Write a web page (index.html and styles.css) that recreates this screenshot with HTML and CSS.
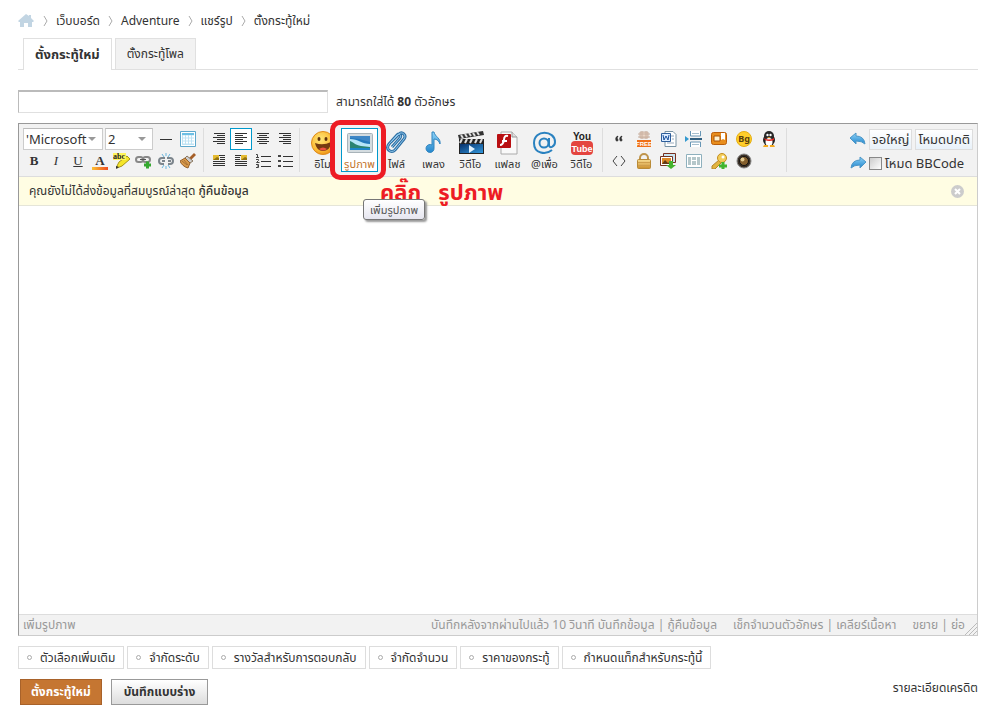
FILE: index.html
```html
<!DOCTYPE html>
<html lang="th">
<head>
<meta charset="utf-8">
<meta name="viewport" content="width=device-width, initial-scale=1">
<title>ตั้งกระทู้ใหม่</title>
<link rel="stylesheet" href="styles.css">
</head>
<body>
<svg class="defs" aria-hidden="true">
  <defs>
    <linearGradient id="gold" x1="0" y1="0" x2="0" y2="1"><stop offset="0" stop-color="#f8dd92"/><stop offset="1" stop-color="#cc8f2c"/></linearGradient>
    <linearGradient id="blue" x1="0" y1="0" x2="0" y2="1"><stop offset="0" stop-color="#8ed3f8"/><stop offset="1" stop-color="#2387cd"/></linearGradient>
    <linearGradient id="deep" x1="0" y1="0" x2="1" y2="1"><stop offset="0" stop-color="#07306a"/><stop offset="1" stop-color="#3197dc"/></linearGradient>
    <radialGradient id="face" cx=".4" cy=".35" r=".7"><stop offset="0" stop-color="#ffe779"/><stop offset=".7" stop-color="#fbb932"/><stop offset="1" stop-color="#e98a14"/></radialGradient>
  </defs>
</svg>

<nav class="crumbs" aria-label="เส้นทาง">
  <a href="#" aria-label="หน้าแรก"><svg width="16" height="14" viewBox="0 0 16 14"><path d="M8 0 0 7l1 1h1v5h4V9h4v4h4V8h1l1-1-3-3V1h-2v1z" fill="#c2d5e3"/></svg></a>
  <svg class="sep" width="5" height="10"><path d="m1 0 3 5-3 5" fill="none" stroke="#aaa"/></svg><a href="#">เว็บบอร์ด</a>
  <svg class="sep" width="5" height="10"><path d="m1 0 3 5-3 5" fill="none" stroke="#aaa"/></svg><a href="#">Adventure</a>
  <svg class="sep" width="5" height="10"><path d="m1 0 3 5-3 5" fill="none" stroke="#aaa"/></svg><a href="#">แชร์รูป</a>
  <svg class="sep" width="5" height="10"><path d="m1 0 3 5-3 5" fill="none" stroke="#aaa"/></svg><span>ตั้งกระทู้ใหม่</span>
</nav>

<nav class="tabs">
  <a href="#" class="tab current">ตั้งกระทู้ใหม่</a>
  <a href="#" class="tab">ตั้งกระทู้โพล</a>
</nav>

<main>
<div class="subject">
  <input type="text" id="subject">
  <label for="subject">สามารถใส่ได้ <b>80</b> ตัวอักษร</label>
</div>

<section class="editor">
  <div class="toolbar">
    <div class="group text-tools">
      <div class="row">
        <select class="font" aria-label="แบบอักษร"><option>'Microsoft</option></select>
        <select class="size" aria-label="ขนาด"><option>2</option></select>
        <button class="tool" aria-label="เส้นคั่น"><svg width="16" height="16"><path d="M2 8.500h12" stroke="#333"/></svg></button>
        <button class="tool" aria-label="ตาราง"><svg width="16" height="16"><path d="M.5.5h15v15H.5z" fill="#fff" stroke="#5fa8cc"/><path d="M2 2h12v2H2z" fill="#6dbfe4"/><path d="M2 4h12v10H2z" fill="#bfe3f4"/><path d="M3 5.500h11M3 8.500h11M3 11.500h11" stroke="#fff" stroke-width="2" stroke-dasharray="2 1"/></svg></button>
      </div>
      <div class="row">
        <button class="tool glyph"><b>B</b></button>
        <button class="tool glyph"><em>I</em></button>
        <button class="tool glyph"><u>U</u></button>
        <button class="tool glyph color">A</button>
        <button class="tool" aria-label="สีพื้น"><svg width="18" height="16"><path d="m4 13 2-4 8-6 3 3-8 7-5 2z" fill="#f5e529" stroke="#a59517"/><path d="m3 13 3 1-3 2z" fill="#333"/><path d="M0 0h13v7H0z" fill="#fff45c"/><text x="0" y="6" class="abc">abc</text></svg></button>
        <button class="tool" aria-label="ลิงก์"><svg width="18" height="16" fill="none"><rect x="1" y="4" width="7" height="5" rx="2.500" stroke="#888" stroke-width="2"/><rect x="8" y="4" width="7" height="5" rx="2.500" stroke="#888" stroke-width="2"/><path d="M5 6.500h6" stroke="#555"/><path d="M9 12h7M12.500 8.500v7" stroke="#35a830" stroke-width="3"/></svg></button>
        <button class="tool" aria-label="ลบลิงก์"><svg width="16" height="16" fill="none"><path d="M7 5H4a3 3 0 0 0 0 6h2M9 5h3a3 3 0 0 1 0 6h-2M4 8h3M10 8h3" stroke="#7c858c" stroke-width="2"/><path d="m4 1 2 3M8 0v3M12 1l-2 3M4 15l2-3M8 16v-3M12 15l-2-3" stroke="#68b6de"/></svg></button>
        <button class="tool" aria-label="ล้างรูปแบบ"><svg width="16" height="16"><path d="m9 5 5-5 2 2-5 5z" fill="#a55f28"/><path d="m7 3 6 5-3 2-5-5z" fill="#ccc" stroke="#8b7860"/><path d="m5 5 5 5-2 5C4 14 1 11 0 8z" fill="#d99b4c" stroke="#95602b"/><path d="m2 8 5 4M4 7l4 5" stroke="#a87034"/></svg></button>
      </div>
    </div>

    <div class="group align-tools">
      <div class="row">
        <button class="tool" aria-label="จัดขวา"><svg width="12" height="12" stroke="#333"><path d="M1 .5h11M4 2.500h8M0 4.500h12M4 6.500h8M0 8.500h12M4 10.500h8"/></svg></button>
        <button class="tool on" aria-label="ชิดซ้าย"><svg width="12" height="12" stroke="#333"><path d="M0 .5h12M0 2.500h8M0 4.500h12M0 6.500h8M0 8.500h12M0 10.500h8"/></svg></button>
        <button class="tool" aria-label="กึ่งกลาง"><svg width="12" height="12" stroke="#333"><path d="M0 .5h12M2 2.500h8M0 4.500h12M2 6.500h8M0 8.500h12M2 10.500h8"/></svg></button>
        <button class="tool" aria-label="ชิดขวา"><svg width="12" height="12" stroke="#333"><path d="M0 .5h12M4 2.500h8M0 4.500h12M4 6.500h8M0 8.500h12M4 10.500h8"/></svg></button>
      </div>
      <div class="row">
        <button class="tool" aria-label="ลอยซ้าย"><svg width="12" height="12"><path d="M0 .5h12M7 2.500h5M7 4.500h5M0 6.500h12M0 8.500h12M0 10.500h12" stroke="#333"/><path d="M0 0h6v5H0z" fill="#e5bb31"/><path d="M0 5h6V3L4 2z" fill="#927310"/></svg></button>
        <button class="tool" aria-label="ลอยขวา"><svg width="12" height="12"><path d="M0 .5h12M0 2.500h5M0 4.500h5M0 6.500h12M0 8.500h12M0 10.500h12" stroke="#333"/><path d="M6 0h6v5H6z" fill="#e5bb31"/><path d="M6 5h6V3l-2-1z" fill="#927310"/></svg></button>
        <button class="tool" aria-label="รายการลำดับ"><svg width="15" height="14"><path d="M5 2.500h10M5 7.500h10M5 12.500h10" stroke="#333"/><path d="M0 .5h1.500v3M0 3.500h3M0 5.500h2.500v1L.5 8.500h3M0 10.500h2.500v3H0M1 12h1" fill="none" stroke="#444"/></svg></button>
        <button class="tool" aria-label="รายการ"><svg width="15" height="14"><path d="M5 2.500h10M5 7.500h10M5 12.500h10" stroke="#333"/><path d="M0 1h3v2H0zM0 6h3v2H0zM0 11h3v2H0z" fill="#444"/></svg></button>
      </div>
    </div>

    <div class="group big-tools">
      <button class="big"><svg width="24" height="24"><circle cx="12" cy="12" r="11.500" fill="url(#face)" stroke="#de8b1b"/><ellipse cx="8" cy="8" rx="1.500" ry="2" fill="#60340e"/><ellipse cx="15" cy="8" rx="1.500" ry="2" fill="#60340e"/><path d="M4 12q8 3 16-1c0 5-3 9-8 9s-7-4-8-8z" fill="#743b10"/><path d="M8 18q4-3 8 0-4 3-8 0" fill="#ef5042"/></svg>อิโม</button>
      <div class="spot">
        <button class="big on"><svg width="26" height="24"><rect x=".5" y="2.500" width="25" height="19" rx="1" fill="#d4dce0" stroke="#a8b3b9"/><path d="M3 5h20v14H3z" fill="#2379bc"/><path d="M3 5h20v6l-11-3-9-1z" fill="#3f87c6"/><path d="M3 8c8 0 12 5 20 5v4H3z" fill="#b5e5f8"/><path d="M3 10c5 2 5 4 11 5l9 1v2H3z" fill="#2a8371"/><path d="M3 17h20v2H3z" fill="#1d85c9"/></svg>รูปภาพ</button>
        <span class="ring"></span>
        <strong class="callout">คลิ๊ก&nbsp;&nbsp; รูปภาพ</strong>
        <span class="tip" role="tooltip">เพิ่มรูปภาพ</span>
      </div>
      <button class="big"><svg width="24" height="24" fill="none"><path d="m6 11 8-8c3-3 8 1 5 5l-9 11c-4 4-10-1-6-6l8-9c2-2 5 0 3 3l-8 9" stroke="#2f70a5" stroke-width="3"/><path d="m6 11 8-8c3-3 8 1 5 5l-9 11c-4 4-10-1-6-6l8-9c2-2 5 0 3 3l-8 9" stroke="#90c9ed"/></svg>ไฟล์</button>
      <button class="big"><svg width="24" height="24"><path d="M10 1h2c1 5 7 6 6 12-1-3-3-5-6-5v9a4 4 0 1 1-2-3z" fill="url(#blue)" stroke="#3185bf"/></svg>เพลง</button>
      <button class="big"><svg width="26" height="24"><path d="m0 4 25-4 1 4L1 8z" fill="#333"/><path d="m3 4 2 3m2-4 2 3m2-4 2 3m2-3 2 3m2-4 2 3" stroke="#ddd" stroke-width="2"/><path d="M1 8h25v15H1z" fill="#222"/><path d="M4 8 2 12m7-4-2 4m7-4-2 4m7-4-2 4m7-4-2 4" stroke="#ddd" stroke-width="2"/><path d="M2 13h23v9H2z" fill="url(#deep)"/><path d="m11 14 6 4-6 4z" fill="#dff1ff"/></svg>วิดีโอ</button>
      <button class="big"><svg width="24" height="24"><path d="M5 1h11l5 5v17H5z" fill="#f9f9f9" stroke="#aaa"/><path d="M16 1v5h5" fill="#ddd" stroke="#999"/><rect x="1" y="3" width="14" height="14" rx="1" fill="#b90f12"/><path d="M12 5q-4-1-4 4-1 5-4 5M6 10h5" fill="none" stroke="#fff" stroke-width="2"/></svg>แฟลช</button>
      <button class="big"><svg width="24" height="24" fill="none" stroke="#2a82c0"><circle cx="11" cy="12" r="4.500" stroke-width="2"/><path d="M16 7v7c0 4 6 2 6-3 0-12-21-13-21 1 0 11 12 12 18 7" stroke-width="2"/></svg>@เพื่อ</button>
      <button class="big"><svg width="24" height="24"><text x="12" y="9" class="yt you">You</text><rect x="1" y="10" width="22" height="14" rx="4" fill="#e4453f"/><text x="12" y="21" class="yt tube">Tube</text></svg>วิดีโอ</button>
    </div>

    <div class="group extras">
      <div class="row">
        <button class="tool" aria-label="อ้างอิง"><svg width="16" height="16"><path d="M7 5Q4 6 5 9a1 1 0 1 0 1-1q0-2 1-3zm4 0Q8 6 9 9a1 1 0 1 0 1-1q0-2 1-3z" fill="#333" stroke="#333"/></svg></button>
        <button class="tool" aria-label="ฟรี"><svg width="16" height="16"><path d="M4 1h8v6H4zM2 3h12M2 6h12M6 0v8M10 0v8" fill="#ead5c5" stroke="#c9b0a0"/><path d="M1 9h14v7H1z" fill="#ef7019"/><text x="8" y="15" class="free">FREE</text></svg></button>
        <button class="tool" aria-label="Word"><svg width="16" height="16"><path d="M4 .5h8l3 3v12H4z" fill="#fff" stroke="#7893a4"/><path d="M10 5h3M11 8h2M6 12h7" stroke="#9ab"/><path d="M.5 2.500h9v8h-9z" fill="#dcecff" stroke="#2d5d9a"/><path d="m2 4 1 5 2-4 2 4 1-5" fill="none" stroke="#174f9c"/></svg></button>
        <button class="tool" aria-label="แบ่งหน้า"><svg width="17" height="16"><path d="M5.500 0v5h10V0M5.500 16v-5h10v5" fill="#fff" stroke="#6896b5"/><path d="M7 2.500h7M7 13.500h7" stroke="#a7bfce"/><path d="M5 8h12" stroke="#315f80" stroke-width="2"/><path d="m0 5 4 3-4 3z" fill="#3499cf"/></svg></button>
        <button class="tool" aria-label="สารบัญ"><svg width="16" height="16"><rect x=".5" y="1.500" width="15" height="12" rx="2" fill="#e88d1d" stroke="#b95d0a"/><path d="M3 5h6v5H3z" fill="#fff2cf" stroke="#a95307"/><path d="M10 2h4v7l-2-1-2 1z" fill="#fff"/></svg></button>
        <button class="tool" aria-label="พื้นหลัง"><svg width="16" height="16"><circle cx="8" cy="8" r="7.500" fill="#ffce29" stroke="#e4ae13"/><text x="8" y="11" class="bg">Bg</text></svg></button>
        <button class="tool" aria-label="QQ"><svg width="16" height="16"><ellipse cx="8" cy="9" rx="6" ry="6" fill="#222"/><ellipse cx="8" cy="5" rx="5" ry="5" fill="#282828"/><ellipse cx="8" cy="11" rx="3.500" ry="4" fill="#fff"/><circle cx="6.500" cy="4" r="1.200" fill="#fff"/><circle cx="9.500" cy="4" r="1.200" fill="#fff"/><path d="M3 7q5 3 10 0v2q-5 2-9 0z" fill="#e0251e"/><path d="M3 14h4v2H2zM9 14h4l1 2H9zM6 6h4l-2 1z" fill="#f4aa20"/></svg></button>
      </div>
      <div class="row">
        <button class="tool" aria-label="โค้ด"><svg width="14" height="12" fill="none" stroke="#444"><path d="M5 1 1 6l4 5M9 1l4 5-4 5"/></svg></button>
        <button class="tool" aria-label="ซ่อน"><svg width="16" height="16"><path d="M4 8V5a4 4 0 0 1 8 0v3" fill="none" stroke="#bf944b" stroke-width="2"/><rect x="1.500" y="6.500" width="13" height="9" rx="1" fill="url(#gold)" stroke="#b98b37"/><path d="M2 9.500h12M2 12.500h12" stroke="#cf9f4c"/></svg></button>
        <button class="tool" aria-label="ดาวน์โหลดรูป"><svg width="17" height="16"><path d="M3.500.5h12v9h-12z" fill="#c9e5f1" stroke="#7a3020"/><path d="M.5 3.500h12v9H.5z" fill="#fff" stroke="#753322"/><path d="M2 5h9v6H2z" fill="#de8a27"/><path d="m2 11 3-4 3 3 3-2v3z" fill="#633b17"/><path d="M9 8h4v4h3l-5 4-5-4h3z" fill="#45b32f"/></svg></button>
        <button class="tool" aria-label="คอลัมน์"><svg width="16" height="16"><path d="M.5 1.500h15v13H.5z" fill="#fff" stroke="#8eb0bd"/><path d="M2 4h3v8H2zM6 4h4v3H6zM6 8h4v4H6zM11 4h3v8h-3z" fill="#b5c7ca"/></svg></button>
        <button class="tool" aria-label="รหัสผ่าน"><svg width="16" height="16"><path d="m8 7 3 2-7 7H1v-3z" fill="#e2b43f" stroke="#b5842a"/><circle cx="11" cy="5" r="4.500" fill="#f3cd59" stroke="#c38d20"/><circle cx="12" cy="4" r="1.500" fill="#fff"/><path d="M8 13h8M12 9v7" stroke="#41b52f" stroke-width="3"/></svg></button>
        <button class="tool" aria-label="กล้อง"><svg width="16" height="16"><circle cx="8" cy="8" r="7" fill="#3b3026" stroke="#888"/><circle cx="8" cy="8" r="4.500" fill="#85602e" stroke="#111"/><circle cx="6.500" cy="6.500" r="2" fill="#e3ca91"/></svg></button>
      </div>
    </div>

    <div class="modes">
      <div class="row">
        <button class="arrow" aria-label="เลิกทำ"><svg width="16" height="14"><path d="M6 1v3q8 0 9 8-3-3-9-3v3L0 6z" fill="url(#blue)" stroke="#4c96c6"/></svg></button>
        <button class="mode">จอใหญ่</button>
        <button class="mode">โหมดปกติ</button>
      </div>
      <div class="row">
        <button class="arrow" aria-label="ทำซ้ำ"><svg width="16" height="14"><path d="M10 1v3Q2 4 1 12q3-3 9-3v3l6-6z" fill="url(#blue)" stroke="#4c96c6"/></svg></button>
        <input type="checkbox" id="bbcode"><label for="bbcode">โหมด BBCode</label>
      </div>
    </div>
  </div>

  <div class="notice">
    <span>คุณยังไม่ได้ส่งข้อมูลที่สมบูรณ์ล่าสุด <a href="#">กู้คืนข้อมูล</a></span>
    <button class="close" aria-label="ปิด"><svg width="13" height="13"><circle cx="6.500" cy="6.500" r="6.500" fill="#ccc"/><path d="m4 4 5 5M9 4 4 9" stroke="#fff" stroke-width="2"/></svg></button>
  </div>

  <textarea class="body" aria-label="เนื้อหา"></textarea>

  <div class="status">
    <span class="hint">เพิ่มรูปภาพ</span>
    <span>บันทึกหลังจากผ่านไปแล้ว 10 วินาที <a href="#">บันทึกข้อมูล</a> | <a href="#">กู้คืนข้อมูล</a></span>
    <span><a href="#">เช็กจำนวนตัวอักษร</a> | <a href="#">เคลียร์เนื้อหา</a></span>
    <span><a href="#">ขยาย</a> | <a href="#">ย่อ</a></span>
    <svg class="grip" width="12" height="12" stroke="#bbb"><path d="M0 12 12 0M4 12l8-8M8 12l4-4"/></svg>
  </div>
</section>

<div class="options">
  <button>ตัวเลือกเพิ่มเติม</button>
  <button>จำกัดระดับ</button>
  <button>รางวัลสำหรับการตอบกลับ</button>
  <button>จำกัดจำนวน</button>
  <button>ราคาของกระทู้</button>
  <button>กำหนดแท็กสำหรับกระทู้นี้</button>
</div>

<div class="actions">
  <button class="primary">ตั้งกระทู้ใหม่</button>
  <button class="draft">บันทึกแบบร่าง</button>
  <a href="#">รายละเอียดเครดิต</a>
</div>
</main>
</body>
</html>
```
FILE: styles.css
```css
*, *::before { box-sizing: border-box; }
body {
  margin: 0;
  padding: 12px 18px;
  background: #fff;
  color: #333;
  font: 12px/18px "Noto Sans", "Noto Sans Thai", sans-serif;
}
a { color: inherit; text-decoration: none; }
button, input, select, textarea { font: inherit; color: inherit; margin: 0; padding: 0; border-radius: 0; }
button { background: none; border: 0; white-space: nowrap; }
svg { display: block; flex: none; }
.defs { position: absolute; width: 0; height: 0; }

.crumbs { display: flex; align-items: center; gap: 8px; height: 18px; white-space: nowrap; }
.crumbs a:first-child { margin-right: 1px; }

.tabs { display: flex; align-items: flex-end; gap: 3px; margin-top: 8px; padding-left: 5px; border-bottom: 1px solid #e0e0e0; white-space: nowrap; }
.tab { height: 31px; padding: 0 11px; border: 1px solid #e0e0e0; border-bottom: 0; background: #f2f2f2; line-height: 30px; }
.tab.current { height: 32px; margin-bottom: -1px; background: #fff; font-size: 13px; font-weight: bold; }

.subject { display: flex; align-items: center; gap: 8px; margin-top: 20px; }
.subject input { width: 310px; height: 23px; border: 1px solid #e0e0e0; border-top: 2px solid #bbb; border-left-color: #bbb; background: #fff; }

.editor { margin-top: 10px; border: 1px solid #ccc; border-top-color: #999; border-left-color: #999; }
.toolbar { display: flex; height: 53px; padding: 4px; background: #f2f2f2; border-bottom: 1px solid #ddd; }
.group { padding-right: 4px; margin-right: 4px; border-right: 1px solid #ddd; }
.row { display: flex; align-items: center; height: 22px; }
.text-tools { width: 181px; }
.align-tools { padding-right: 3px; }
.font, .size {
  appearance: none;
  height: 22px;
  padding: 0 2px;
  border: 1px solid #ccc;
  border-top-color: #bbb;
  background: #fff url("data:image/svg+xml,%3Csvg xmlns='http://www.w3.org/2000/svg' width='8' height='4'%3E%3Cpath d='M0 0h8L4 4z' fill='%23999'/%3E%3C/svg%3E") no-repeat right 6px center;
  font-size: 13px;
  line-height: 18px;
}
.font { width: 82px; }
.size { width: 49px; margin: 0 2px; }
.tool { display: flex; flex: none; align-items: center; justify-content: center; width: 22px; height: 22px; }
.tool.on { border: 1px solid #09c; background: #fff; }
.glyph { font-family: "Liberation Serif", serif; font-size: 13px; }
.color { font-weight: bold; line-height: 12px; background: linear-gradient(90deg, #fcc132, #ee4b20) no-repeat center 17px / 16px 3px; }
.abc { font: bold 8px "Liberation Serif", serif; fill: #222; }

.big-tools { display: flex; padding-right: 2px; margin-right: 3px; }
.big { display: flex; flex-direction: column; align-items: center; gap: 1px; width: 37px; height: 44px; padding-top: 3px; font-size: 11px; line-height: 16px; }
.big.on { border: 1px solid #09c; padding-top: 2px; background: #fff; color: #c3762f; }
.yt { text-anchor: middle; font-family: "Liberation Sans Narrow", "Liberation Sans", sans-serif; font-weight: bold; }
.you { font-size: 10px; fill: #222; }
.tube { font-size: 9px; fill: #fff; }
.bg { font: bold 9px "Noto Sans", sans-serif; text-anchor: middle; fill: #59400c; }
.free { font: bold 6px "Liberation Sans", sans-serif; text-anchor: middle; fill: #fff; }
.extras { width: 181px; }
.extras .tool { width: 25px; }

.spot { position: relative; white-space: nowrap; }
.ring { position: absolute; z-index: 2; left: -11px; top: -8px; width: 56px; height: 60px; border: 5px solid #ed1c24; border-radius: 10px; pointer-events: none; }
.callout { position: absolute; z-index: 2; left: 39px; top: 49px; color: #ed1c24; font-size: 22px; line-height: 28px; }
.tip { position: absolute; z-index: 3; left: 22px; top: 71px; padding: 0 6px; border: 1px solid #767676; border-radius: 3px; background: linear-gradient(#fff, #e6e6f0); box-shadow: 2px 2px 2px #999; color: #555; font-size: 11px; line-height: 19px; }

.modes { margin-left: auto; font-size: 13px; white-space: nowrap; }
.modes .row { gap: 3px; }
.modes .row + .row { margin-top: 2px; }
.arrow { width: 16px; }
.mode { height: 21px; padding: 0 2px; border: 1px solid #ddd; background: linear-gradient(#fff, #e8f1f9); line-height: 18px; }
.modes input { appearance: none; width: 13px; height: 13px; border: 1px solid #888; background: linear-gradient(135deg, #ccc, #fff); }

.notice { display: flex; align-items: center; justify-content: space-between; height: 29px; padding: 0 13px 0 10px; border-bottom: 1px solid #e5e5d8; background: #fffde3; }
.notice a { font-weight: 500; }
.body { display: block; width: 100%; height: 408px; border: 0; resize: none; outline: 0; }
.status { display: flex; align-items: center; gap: 16px; height: 21px; padding-left: 4px; border-top: 1px solid #ddd; background: #f2f2f2; color: #999; white-space: nowrap; }
.hint { margin-right: auto; }
.grip { align-self: flex-end; margin-left: -16px; }

.options { display: flex; flex-wrap: wrap; gap: 3px; margin-top: 10px; }
.options button { display: flex; align-items: center; gap: 8px; height: 23px; padding: 0 8px; border: 1px solid #ddd; background: #fff; }
.options button::before { content: ""; width: 5px; height: 5px; border: 1px solid #aaa; border-radius: 50%; }

.actions { display: flex; align-items: flex-start; gap: 9px; margin-top: 10px; padding-left: 2px; }
.actions button { height: 26px; padding: 0 10px; font-weight: bold; }
.actions .primary { border: 1px solid #a8622a; background: #c57632; color: #fff; }
.actions .draft { padding: 0 12px; border: 1px solid #999; background: linear-gradient(#fff, #ddd); }
.actions a { margin-left: auto; }
```
